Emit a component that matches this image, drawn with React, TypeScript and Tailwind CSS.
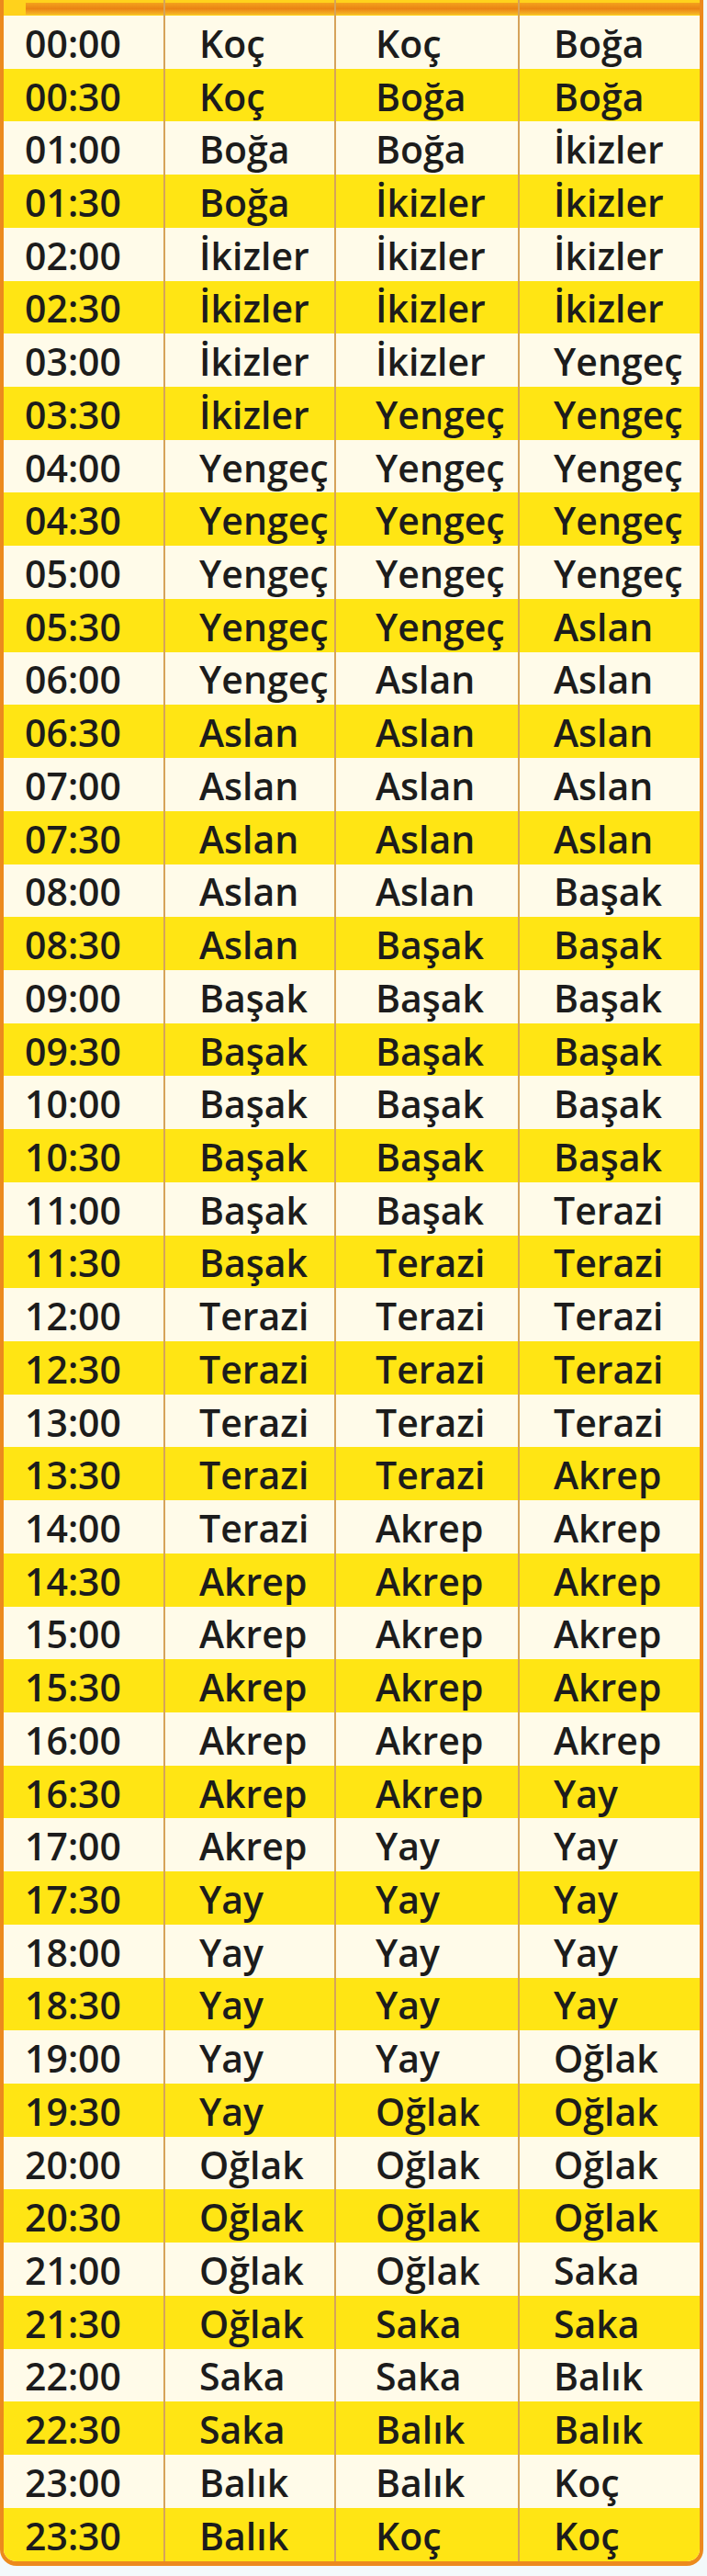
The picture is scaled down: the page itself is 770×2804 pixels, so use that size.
const rows: readonly (readonly [string, string, string, string])[] = [
  ["00:00", "Koç", "Koç", "Boğa"],
  ["00:30", "Koç", "Boğa", "Boğa"],
  ["01:00", "Boğa", "Boğa", "İkizler"],
  ["01:30", "Boğa", "İkizler", "İkizler"],
  ["02:00", "İkizler", "İkizler", "İkizler"],
  ["02:30", "İkizler", "İkizler", "İkizler"],
  ["03:00", "İkizler", "İkizler", "Yengeç"],
  ["03:30", "İkizler", "Yengeç", "Yengeç"],
  ["04:00", "Yengeç", "Yengeç", "Yengeç"],
  ["04:30", "Yengeç", "Yengeç", "Yengeç"],
  ["05:00", "Yengeç", "Yengeç", "Yengeç"],
  ["05:30", "Yengeç", "Yengeç", "Aslan"],
  ["06:00", "Yengeç", "Aslan", "Aslan"],
  ["06:30", "Aslan", "Aslan", "Aslan"],
  ["07:00", "Aslan", "Aslan", "Aslan"],
  ["07:30", "Aslan", "Aslan", "Aslan"],
  ["08:00", "Aslan", "Aslan", "Başak"],
  ["08:30", "Aslan", "Başak", "Başak"],
  ["09:00", "Başak", "Başak", "Başak"],
  ["09:30", "Başak", "Başak", "Başak"],
  ["10:00", "Başak", "Başak", "Başak"],
  ["10:30", "Başak", "Başak", "Başak"],
  ["11:00", "Başak", "Başak", "Terazi"],
  ["11:30", "Başak", "Terazi", "Terazi"],
  ["12:00", "Terazi", "Terazi", "Terazi"],
  ["12:30", "Terazi", "Terazi", "Terazi"],
  ["13:00", "Terazi", "Terazi", "Terazi"],
  ["13:30", "Terazi", "Terazi", "Akrep"],
  ["14:00", "Terazi", "Akrep", "Akrep"],
  ["14:30", "Akrep", "Akrep", "Akrep"],
  ["15:00", "Akrep", "Akrep", "Akrep"],
  ["15:30", "Akrep", "Akrep", "Akrep"],
  ["16:00", "Akrep", "Akrep", "Akrep"],
  ["16:30", "Akrep", "Akrep", "Yay"],
  ["17:00", "Akrep", "Yay", "Yay"],
  ["17:30", "Yay", "Yay", "Yay"],
  ["18:00", "Yay", "Yay", "Yay"],
  ["18:30", "Yay", "Yay", "Yay"],
  ["19:00", "Yay", "Yay", "Oğlak"],
  ["19:30", "Yay", "Oğlak", "Oğlak"],
  ["20:00", "Oğlak", "Oğlak", "Oğlak"],
  ["20:30", "Oğlak", "Oğlak", "Oğlak"],
  ["21:00", "Oğlak", "Oğlak", "Saka"],
  ["21:30", "Oğlak", "Saka", "Saka"],
  ["22:00", "Saka", "Saka", "Balık"],
  ["22:30", "Saka", "Balık", "Balık"],
  ["23:00", "Balık", "Balık", "Koç"],
  ["23:30", "Balık", "Koç", "Koç"],
];

const cols = "grid grid-cols-[174px_186px_200px_1fr]";
const line = "border-l-2 border-[#d6a35a]";
const bar = "h-[13px] bg-gradient-to-b from-[#f4a21c] via-[#ea8314] to-[#f5b928]";

export default function App() {
  return (
    <div className="h-[2804px] w-[770px] bg-[#f3f9fb] font-['Open_Sans',sans-serif]">
      <div className="w-[766px] overflow-hidden rounded-b-[18px] border-x-4 border-b-[5px] border-[#ec8a1d] bg-[#fffbe9]">
        {/* header strip with the orange bar */}
        <div className={`${cols} h-[17px] bg-[#ffd21c]`}>
          <div className="pl-6 pt-[3px]">
            <div className={bar} />
          </div>
          {[0, 1, 2].map((i) => (
            <div key={i} className={`${line} pt-[3px]`}>
              <div className={bar} />
            </div>
          ))}
        </div>

        {rows.map(([time, a, b, c], i) => (
          <div
            key={time}
            className={`${cols} h-[57.73px] text-[41px] font-semibold leading-none text-[#1c1c1c] ${
              i % 2 === 0 ? "bg-[#fffbe9]" : "bg-[#ffe514]"
            }`}
          >
            <div className="flex items-center pl-[23px] pt-[3px]">{time}</div>
            <div className={`${line} flex items-center pl-[37px] pt-[3px]`}>{a}</div>
            <div className={`${line} flex items-center pl-[43px] pt-[3px]`}>{b}</div>
            <div className={`${line} flex items-center pl-[37px] pt-[3px]`}>{c}</div>
          </div>
        ))}
      </div>
    </div>
  );
}
